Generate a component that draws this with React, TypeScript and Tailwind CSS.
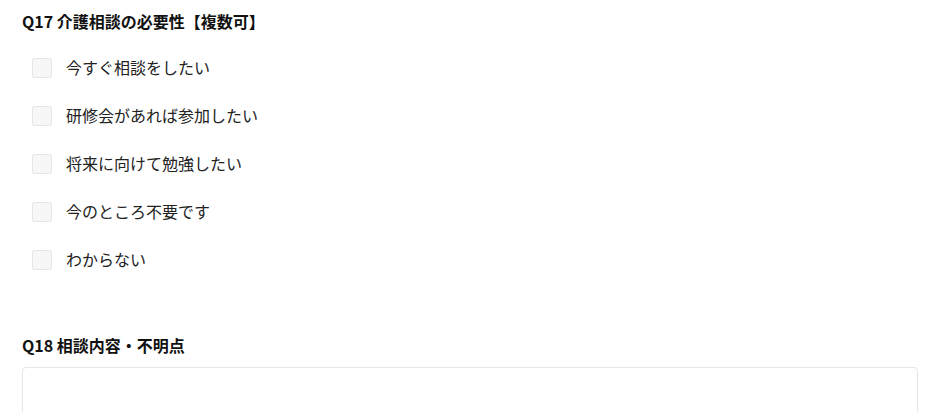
const options = [
  "今すぐ相談をしたい",
  "研修会があれば参加したい",
  "将来に向けて勉強したい",
  "今のところ不要です",
  "わからない",
];

export default function App() {
  return (
    <div className="h-[412px] overflow-hidden bg-white pl-[22px] pr-[23px] pt-[9px] font-['Noto_Sans_CJK_JP',sans-serif] text-[#222]">
      <h2 className="text-[16px] font-bold leading-6 text-[#111]">
        Q17 介護相談の必要性【複数可】
      </h2>
      <ul className="mt-[10.5px] pl-[10px]">
        {options.map((label) => (
          <li key={label} className="flex h-12 items-center">
            <label className="flex items-center gap-[14px]">
              <span className="mt-[1px] block h-5 w-5 rounded-[2px] border border-[#e6e6e6] bg-[#f7f7f7]" />
              <span className="pb-[2px] text-[16px] leading-6">{label}</span>
            </label>
          </li>
        ))}
      </ul>
      <h2 className="mt-[49.5px] text-[16px] font-bold leading-6 text-[#111]">
        Q18 相談内容・不明点
      </h2>
      <textarea className="mt-[10px] block h-[120px] w-full resize-none rounded-[4px] border border-[#e6e6e6] bg-white" />
    </div>
  );
}
